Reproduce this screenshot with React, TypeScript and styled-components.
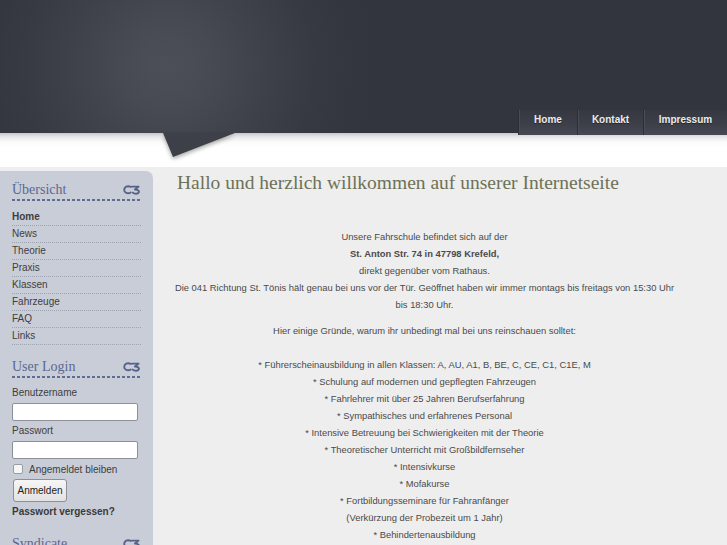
import React from 'react';
import styled, { createGlobalStyle } from 'styled-components';

const GlobalStyle = createGlobalStyle`
  html, body {
    margin: 0;
    padding: 0;
    background: #eeeeee;
    font-family: 'Liberation Sans', Arial, sans-serif;
  }
  * {
    box-sizing: border-box;
  }
`;

export const Wrapper = styled.div`
  width: 727px;
  min-height: 545px;
  overflow: hidden;
`;

export const Header = styled.div`
  position: relative;
  height: 133px;
  background: radial-gradient(
    circle at 167px 66px,
    #4c4f57 0,
    #4a4d55 22px,
    #474a52 45px,
    #43464e 68px,
    #3f424a 92px,
    #3b3e46 118px,
    #373a42 145px,
    #34373f 175px,
    #32353d 210px
  );
  display: flex;
  align-items: flex-end;
  justify-content: flex-end;
`;

export const Flag = styled.svg`
  position: absolute;
  left: 155px;
  top: 133px;
  z-index: 2;
  overflow: visible;
`;

export const NavItems = styled.ul`
  list-style: none;
  margin: 0 0 -2px 0;
  padding: 0;
  display: flex;
  height: 25px;
`;

export const NavItem = styled.li<{ $w: number }>`
  width: ${({ $w }) => $w}px;
  height: 100%;
  display: flex;
  align-items: center;
  justify-content: center;
  padding-bottom: 6px;
  font-size: 10px;
  font-weight: 700;
  color: #ececec;
  text-shadow: 0 1px 0 #24262c;
  background: linear-gradient(#353840, #3d4048 60%, #474a52);
  border-left: 1px solid #2c2e35;
  box-shadow: inset 1px 0 0 #4a4d55;
  cursor: pointer;
`;

export const ShadowBand = styled.div`
  height: 34px;
  background: linear-gradient(#c6c7c9 0, #e8e8e9 4px, #fbfbfb 9px, #ffffff 14px);
`;

export const Body = styled.div`
  display: flex;
  align-items: flex-start;
`;

export const Sidebar = styled.div`
  width: 153px;
  margin-top: 4px;
  min-height: 380px;
  background: #c9cdd8;
  border-radius: 0 7px 0 0;
  padding: 10px 12px 0 12px;
`;

export const BlockTitle = styled.div<{ $gap: number }>`
  display: flex;
  justify-content: space-between;
  align-items: center;
  height: 20px;
  padding-bottom: 2px;
  font-family: 'Liberation Serif', 'Times New Roman', serif;
  font-size: 14px;
  color: #5a6890;
  background: repeating-linear-gradient(90deg, #5f6d96 0 3px, transparent 3px 5px) left bottom / 100% 2px no-repeat;
  margin-bottom: ${({ $gap }) => $gap}px;
`;

export const Menu = styled.ul`
  list-style: none;
  margin: 0 0 13px 0;
  padding: 0;
`;

export const MenuItem = styled.li<{ $active?: boolean }>`
  height: 17px;
  line-height: 16px;
  font-size: 10px;
  color: #3e3e3e;
  font-weight: ${({ $active }) => ($active ? 700 : 400)};
  border-bottom: 1px dotted #9ea3b1;
`;

export const Label = styled.div`
  font-size: 10px;
  color: #3e3e3e;
  height: 12px;
  line-height: 12px;
  margin: 4px 0 4px 0;
`;

export const TextInput = styled.input`
  display: block;
  width: 126px;
  height: 18px;
  margin: 0;
  border: 1px solid #8c8f98;
  border-radius: 2px;
  background: #fff;
  padding: 0 3px;
`;

export const CheckRow = styled.label`
  display: flex;
  align-items: center;
  gap: 6px;
  font-size: 10px;
  color: #3e3e3e;
  height: 14px;
  margin: 3px 0 3px 1px;
`;

export const CheckBox = styled.span`
  width: 10px;
  height: 10px;
  border: 1px solid #9a9ca3;
  border-radius: 2px;
  background: #f6f6f6;
`;

export const Button = styled.button`
  display: block;
  width: 54px;
  height: 23px;
  margin: 0 0 3px 1px;
  padding: 0;
  font-family: 'Liberation Sans', Arial, sans-serif;
  font-size: 10px;
  color: #222;
  border: 1px solid #8e9097;
  border-radius: 3px;
  background: linear-gradient(#f6f6f6, #e2e2e2);
`;

export const Forgot = styled.div`
  font-size: 10px;
  font-weight: 700;
  color: #3a3a3a;
  height: 14px;
  line-height: 14px;
  margin-bottom: 16px;
`;

export const Main = styled.div`
  flex: 1;
  padding: 4px 48px 0 17px;
`;

export const Title = styled.h1`
  margin: 0 0 34px 7px;
  font-family: 'Liberation Serif', 'Times New Roman', serif;
  font-weight: 400;
  font-size: 19.5px;
  line-height: 23px;
  color: #6d7256;
`;

export const Para = styled.p<{ $gap?: number }>`
  margin: 0 0 ${({ $gap }) => ($gap ?? 9)}px 0;
  text-align: center;
  font-size: 9.4px;
  line-height: 17px;
  color: #4a4a4a;
`;

const Swirl = () => (
  <svg width="18" height="10" viewBox="0 0 18 10">
    <path
      d="M7.6 1.8 C4.4 0.2 1.2 2 1.2 4.9 C1.2 7.8 4.6 9 7.6 7.6 M9 1.6 L15.6 1.6 L12 4.6 C15 4.4 16.4 6 15.8 7.4 C15 9.2 11.4 9.2 9.8 7.6"
      fill="none"
      stroke="#55638b"
      strokeWidth="1.9"
      strokeLinecap="round"
      strokeLinejoin="round"
    />
  </svg>
);

const menu = ['Home', 'News', 'Theorie', 'Praxis', 'Klassen', 'Fahrzeuge', 'FAQ', 'Links'];

const reasons = [
  '* Führerscheinausbildung in allen Klassen: A, AU, A1, B, BE, C, CE, C1, C1E, M',
  '* Schulung auf modernen und gepflegten Fahrzeugen',
  '* Fahrlehrer mit über 25 Jahren Berufserfahrung',
  '* Sympathisches und erfahrenes Personal',
  '* Intensive Betreuung bei Schwierigkeiten mit der Theorie',
  '* Theoretischer Unterricht mit Großbildfernseher',
  '* Intensivkurse',
  '* Mofakurse',
  '* Fortbildungsseminare für Fahranfänger',
  '(Verkürzung der Probezeit um 1 Jahr)',
  '* Behindertenausbildung',
];

const App = (): JSX.Element => {
  return (
    <Wrapper>
      <GlobalStyle />
      <Header>
        <Flag width="90" height="34" viewBox="0 0 90 34">
          <defs>
            <filter id="fs" x="-30%" y="-30%" width="160%" height="180%">
              <feDropShadow dx="0" dy="2" stdDeviation="2.2" floodColor="#000" floodOpacity="0.35" />
            </filter>
            <linearGradient id="fg" x1="0" y1="0" x2="1" y2="1">
              <stop offset="0" stopColor="#3f424a" />
              <stop offset="1" stopColor="#393c44" />
            </linearGradient>
          </defs>
          <polygon points="8,0 80,0 18,24" fill="url(#fg)" filter="url(#fs)" />
        </Flag>
        <NavItems>
          <NavItem $w={59}>Home</NavItem>
          <NavItem $w={66}>Kontakt</NavItem>
          <NavItem $w={84}>Impressum</NavItem>
        </NavItems>
      </Header>
      <ShadowBand />
      <Body>
        <Sidebar>
          <BlockTitle $gap={8}>
            <span>Übersicht</span>
            <Swirl />
          </BlockTitle>
          <Menu>
            {menu.map((m, i) => (
              <MenuItem key={m} $active={i === 0}>
                {m}
              </MenuItem>
            ))}
          </Menu>
          <BlockTitle $gap={9}>
            <span>User Login</span>
            <Swirl />
          </BlockTitle>
          <Label>Benutzername</Label>
          <TextInput type="text" />
          <Label>Passwort</Label>
          <TextInput type="password" />
          <CheckRow>
            <CheckBox />
            Angemeldet bleiben
          </CheckRow>
          <Button>Anmelden</Button>
          <Forgot>Passwort vergessen?</Forgot>
          <BlockTitle $gap={8}>
            <span>Syndicate</span>
            <Swirl />
          </BlockTitle>
        </Sidebar>
        <Main>
          <Title>Hallo und herzlich willkommen auf unserer Internetseite</Title>
          <Para>
            Unsere Fahrschule befindet sich auf der
            <br />
            <b>St. Anton Str. 74 in 47798 Krefeld,</b>
            <br />
            direkt gegenüber vom Rathaus.
            <br />
            Die 041 Richtung St. Tönis hält genau bei uns vor der Tür. Geöffnet haben wir immer montags bis freitags von 15:30 Uhr bis 18:30 Uhr.
          </Para>
          <Para $gap={0}>Hier einige Gründe, warum ihr unbedingt mal bei uns reinschauen solltet:</Para>
          <Para>
            <br />
            {reasons.map((r) => (
              <React.Fragment key={r}>
                {r}
                <br />
              </React.Fragment>
            ))}
          </Para>
        </Main>
      </Body>
    </Wrapper>
  );
};

export default App;
